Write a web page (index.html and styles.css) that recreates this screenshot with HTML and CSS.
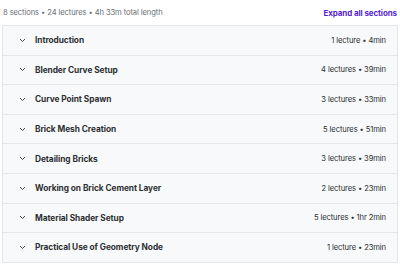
FILE: index.html
```html
<!DOCTYPE html>
<html>
<head>
<meta charset="utf-8">
<link rel="stylesheet" href="styles.css">
</head>
<body>
<div class="page">
  <div class="top">
    <span class="summary">8 sections • 24 lectures • 4h 33m total length</span>
    <span class="expand">Expand all sections</span>
  </div>
  <div class="list">
    <div class="row"><span class="chev"><svg width="7" height="5" viewBox="0 0 7 5"><path d="M1 1 L3.5 3.5 L6 1" fill="none" stroke="#4a4d50" stroke-width="1"/></svg></span><span class="title">Introduction</span><span class="meta">1 lecture • 4min</span></div>
    <div class="row"><span class="chev"><svg width="7" height="5" viewBox="0 0 7 5"><path d="M1 1 L3.5 3.5 L6 1" fill="none" stroke="#4a4d50" stroke-width="1"/></svg></span><span class="title">Blender Curve Setup</span><span class="meta">4 lectures • 39min</span></div>
    <div class="row"><span class="chev"><svg width="7" height="5" viewBox="0 0 7 5"><path d="M1 1 L3.5 3.5 L6 1" fill="none" stroke="#4a4d50" stroke-width="1"/></svg></span><span class="title">Curve Point Spawn</span><span class="meta">3 lectures • 33min</span></div>
    <div class="row"><span class="chev"><svg width="7" height="5" viewBox="0 0 7 5"><path d="M1 1 L3.5 3.5 L6 1" fill="none" stroke="#4a4d50" stroke-width="1"/></svg></span><span class="title">Brick Mesh Creation</span><span class="meta">5 lectures • 51min</span></div>
    <div class="row"><span class="chev"><svg width="7" height="5" viewBox="0 0 7 5"><path d="M1 1 L3.5 3.5 L6 1" fill="none" stroke="#4a4d50" stroke-width="1"/></svg></span><span class="title">Detailing Bricks</span><span class="meta">3 lectures • 39min</span></div>
    <div class="row"><span class="chev"><svg width="7" height="5" viewBox="0 0 7 5"><path d="M1 1 L3.5 3.5 L6 1" fill="none" stroke="#4a4d50" stroke-width="1"/></svg></span><span class="title">Working on Brick Cement Layer</span><span class="meta">2 lectures • 23min</span></div>
    <div class="row"><span class="chev"><svg width="7" height="5" viewBox="0 0 7 5"><path d="M1 1 L3.5 3.5 L6 1" fill="none" stroke="#4a4d50" stroke-width="1"/></svg></span><span class="title">Material Shader Setup</span><span class="meta">5 lectures • 1hr 2min</span></div>
    <div class="row"><span class="chev"><svg width="7" height="5" viewBox="0 0 7 5"><path d="M1 1 L3.5 3.5 L6 1" fill="none" stroke="#4a4d50" stroke-width="1"/></svg></span><span class="title">Practical Use of Geometry Node</span><span class="meta">1 lecture • 23min</span></div>
  </div>
</div>
</body>
</html>
```
FILE: styles.css
```css
html, body { margin: 0; padding: 0; background: #fff; }
body { font-family: Inter, "Noto Sans", sans-serif; color: #2d2f31; }
.page { width: 396px; padding: 0 3px 0 2px; }
.top {
  display: flex; justify-content: space-between; align-items: center;
  height: 25px; padding: 0 1px 0 1px;
}
.summary { font-size: 7.6px; color: #6a6f73; letter-spacing: -0.1px; }
.expand { font-size: 8px; font-weight: 700; color: #5624d0; letter-spacing: -0.1px; }
.list { border: 1px solid #e4e7e9; border-bottom: none; }
.row {
  display: flex; align-items: center;
  height: 28.6px; background: #f7f9fa;
  border-bottom: 1px solid #e4e7e9;
  padding: 0 11px 0 16px;
}
.chev { width: 16px; display: flex; align-items: center; }
.title { font-size: 8.3px; font-weight: 700; flex: 1; letter-spacing: -0.05px; }
.meta { font-size: 7.6px; color: #2d2f31; letter-spacing: -0.1px; }
```
